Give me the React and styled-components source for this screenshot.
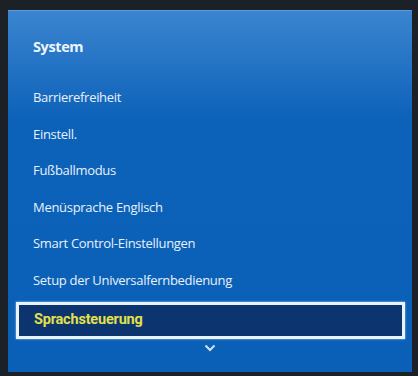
import React from 'react';
import styled, { createGlobalStyle } from 'styled-components';

const GlobalStyle = createGlobalStyle`
  html, body {
    margin: 0;
    padding: 0;
    background: #1b2127;
  }
  body {
    font-family: 'Open Sans', 'Noto Sans', sans-serif;
  }
`;

const Screen = styled.div`
  width: 418px;
  height: 376px;
  box-sizing: border-box;
  padding: 10px 6px 4px 8px;
  background: #1b2127;
`;

const Panel = styled.div`
  height: 100%;
  box-sizing: border-box;
  display: flex;
  flex-direction: column;
  padding: 26px 7px 0 8px;
  border-top: 1px solid #5d9be0;
  background: linear-gradient(180deg, #3b85d0 0%, #1f6fc2 18%, #0c62b8 30%, #0a60b6 100%);
`;

const Title = styled.div`
  color: #eef4fb;
  font-size: 14.5px;
  font-weight: 700;
  letter-spacing: -0.4px;
  padding-left: 17px;
  height: 20px;
  line-height: 20px;
  margin-bottom: 22px;
`;

const List = styled.ul`
  list-style: none;
  margin: 0;
  padding: 0;
  display: flex;
  flex-direction: column;
`;

const Item = styled.li`
  height: 36.5px;
  line-height: 36px;
  box-sizing: border-box;
  padding-left: 17px;
  font-size: 13px;
  letter-spacing: -0.3px;
  color: #e9f1fb;
`;

const Selected = styled(Item)`
  height: 37px;
  margin-top: 4px;
  padding-left: 15px;
  line-height: 30px;
  border: 3px solid #e8f3fc;
  background: #0c3570;
  color: #e3e04a;
  font-family: Roboto, 'Open Sans', sans-serif;
  font-size: 14.5px;
  font-weight: 700;
  letter-spacing: -0.2px;
  box-shadow: 0 0 2px rgba(200, 230, 255, 0.8);
`;

const More = styled.div`
  display: flex;
  justify-content: center;
  padding-top: 5px;
  padding-right: 1px;
`;

const items = [
  'Barrierefreiheit',
  'Einstell.',
  'Fußballmodus',
  'Menüsprache Englisch',
  'Smart Control-Einstellungen',
  'Setup der Universalfernbedienung',
];

export default function App() {
  return (
    <>
      <GlobalStyle />
      <Screen>
        <Panel>
          <Title>System</Title>
          <List>
            {items.map((label) => (
              <Item key={label}>{label}</Item>
            ))}
            <Selected>Sprachsteuerung</Selected>
          </List>
          <More>
            <svg width="12" height="8" viewBox="0 0 12 8">
              <path d="M1.5 1.5 L6 6 L10.5 1.5" fill="none" stroke="#cfe2f7" strokeWidth="2" />
            </svg>
          </More>
        </Panel>
      </Screen>
    </>
  );
}
